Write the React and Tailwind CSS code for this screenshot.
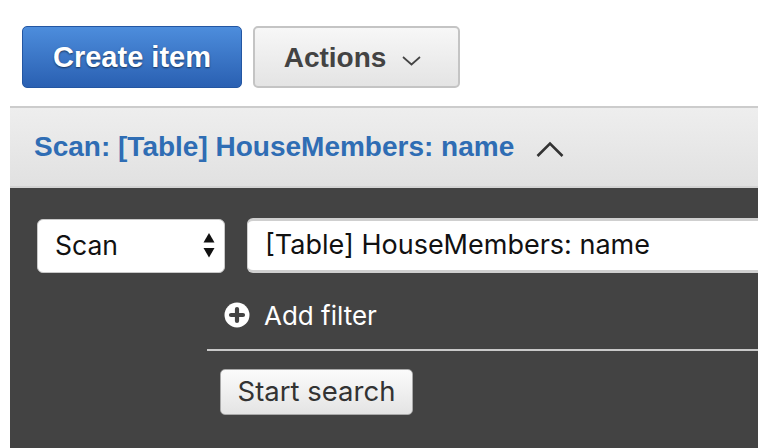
export default function App() {
  return (
    <div className="w-[758px] h-[448px] bg-white overflow-hidden font-['Liberation_Sans',Arial,sans-serif]">
      <div className="flex gap-[11px] pl-[22px] pt-[26px] h-[106px]">
        <button className="w-[220px] h-[62px] rounded-[5px] border border-[#2356a2] bg-gradient-to-b from-[#4d8ddc] to-[#2a60b2] text-white font-bold text-[29px] [text-shadow:0_1px_2px_rgba(0,0,0,0.55)] flex items-center justify-center pt-[2px]">
          Create item
        </button>
        <button className="w-[207px] h-[62px] rounded-[5px] border-2 border-[#c4c4c4] bg-gradient-to-b from-[#f7f7f7] to-[#e4e4e4] text-[#434343] font-bold text-[28px] flex items-center justify-center gap-[16px] pr-[8px] pt-[2px]">
          <span>Actions</span>
          <svg width="19" height="10" viewBox="0 0 19 10" className="mt-[6px]">
            <path d="M1 1 L9.5 8.5 L18 1" fill="none" stroke="#444" strokeWidth="1.7" />
          </svg>
        </button>
      </div>
      <div className="ml-[10px] border-t-2 border-[#cccccc]">
        <div className="h-[80px] bg-gradient-to-b from-[#eeeeee] to-[#e1e1e1] border-b-2 border-[#d3d3d3] flex items-center pl-[24px]">
          <span className="text-[#2f6db4] font-bold text-[28px]">Scan: [Table] HouseMembers: name</span>
          <svg width="28" height="17" viewBox="0 0 28 17" className="ml-[22px] mt-[4px]">
            <path d="M1.5 15 L14 2.5 L26.5 15" fill="none" stroke="#333" strokeWidth="2.6" />
          </svg>
        </div>
        <div className="bg-[#434343] h-[260px] pt-[30px] pl-[27px] font-['Inter',sans-serif]">
          <div className="flex gap-[22px] items-center">
            <div className="w-[188px] h-[54px] shrink-0 rounded-[6px] bg-white border border-[#c9c9c9] flex items-center justify-between pl-[17px] pr-[9px] text-[26.5px] text-[#111]">
              <span>Scan</span>
              <svg width="12" height="25" viewBox="0 0 12 25">
                <path d="M6 0 L11.5 9.5 L0.5 9.5 Z" fill="#111" />
                <path d="M6 24.5 L11.5 15 L0.5 15 Z" fill="#111" />
              </svg>
            </div>
            <div className="flex-1 h-[55px] rounded-l-[6px] bg-white border-y-[3px] border-l border-[#cfcfcf] flex items-center pl-[17px] text-[27px] text-[#111]">
              [Table] HouseMembers: name
            </div>
          </div>
          <div className="ml-[170px]">
            <div className="h-[76px] flex items-center pt-[8px] pl-[17px] gap-[14px] text-white text-[26px]">
              <svg width="26" height="26" viewBox="0 0 26 26">
                <circle cx="13" cy="13" r="12.5" fill="#fff" />
                <path d="M13 7 V19 M7 13 H19" stroke="#434343" strokeWidth="4.2" strokeLinecap="round" />
              </svg>
              <span>Add filter</span>
            </div>
            <div className="border-t-2 border-[#c9c9c9]"></div>
            <button className="mt-[18px] ml-[13px] w-[193px] h-[46px] rounded-[5px] border border-[#a9a9a9] bg-gradient-to-b from-[#fbfbfb] to-[#e4e4e4] text-[#333] text-[27.5px] flex items-center justify-center">
              Start search
            </button>
          </div>
        </div>
      </div>
    </div>
  );
}
